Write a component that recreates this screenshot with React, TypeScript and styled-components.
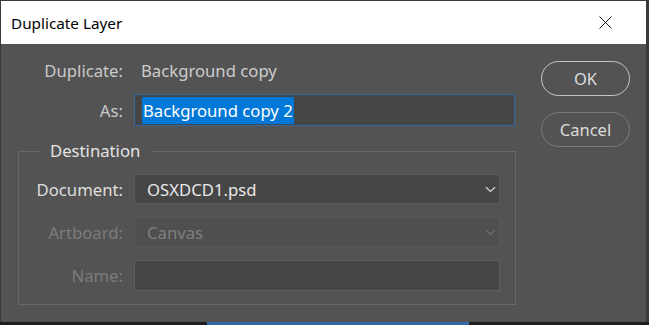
import React from "react";
import styled, { createGlobalStyle } from "styled-components";

const Global = createGlobalStyle`
  html, body { margin: 0; padding: 0; background: #3a3a3a; }
  body { font-family: "Noto Sans", "Open Sans", sans-serif; overflow: hidden; }
  * { box-sizing: border-box; }
`;

const Screen = styled.div`
  width: 649px;
  height: 325px;
  display: flex;
  flex-direction: column;
  padding: 1px 3px 0 1px;
`;

const Window = styled.div`
  flex: 1;
  display: flex;
  flex-direction: column;
  background: #535353;
`;

const TitleBar = styled.div`
  height: 43px;
  flex: none;
  background: #ffffff;
  display: flex;
  align-items: center;
  justify-content: space-between;
  padding: 0 34px 0 10px;
  color: #000;
  font-size: 15.3px;
`;

const CloseIcon = () => (
  <svg width="13" height="13" viewBox="0 0 13 13">
    <path d="M0.5 0.5 L12.5 12.5 M12.5 0.5 L0.5 12.5" stroke="#111" strokeWidth="1" />
  </svg>
);

const Body = styled.div`
  flex: 1;
  display: flex;
  padding: 10px 0 0 17px;
  gap: 25px;
`;

const Main = styled.div`
  width: 498px;
  display: flex;
  flex-direction: column;
`;

const TopGrid = styled.div`
  display: grid;
  grid-template-columns: 105px 381px;
  column-gap: 11px;
  row-gap: 8px;
  grid-auto-rows: 32px;
  align-items: center;
`;

const Label = styled.div<{ $disabled?: boolean; $bright?: boolean }>`
  text-align: right;
  font-size: 16.7px;
  color: ${(p) => (p.$disabled ? "#7b7b7b" : p.$bright ? "#dedede" : "#c9c9c9")};
`;

const Value = styled.div`
  font-size: 16.7px;
  color: #cdcdcd;
  padding-left: 7px;
`;

const TextField = styled.div`
  height: 32px;
  border: 1px solid #3469a8;
  background: #454545;
  display: flex;
  align-items: center;
  padding-left: 7px;
`;

const Selected = styled.span`
  background: #0078d7;
  color: #ffffff;
  font-size: 16.7px;
  line-height: 27px;
  padding: 0 1px;
`;

const Group = styled.fieldset`
  margin: 15px 0 0 0;
  border: 1px solid #676767;
  border-radius: 0;
  padding: 13px 15px 13px 0;
`;

const Legend = styled.legend`
  margin-left: 21px;
  padding: 0 11px 0 10px;
  font-size: 16.7px;
  line-height: 20px;
  color: #e4e4e4;
`;

const FormGrid = styled.div`
  display: grid;
  grid-template-columns: 104px 366px;
  column-gap: 11px;
  grid-template-rows: 30px 30px 31px;
  row-gap: 13px;
  align-items: center;
`;

const Select = styled.div<{ $disabled?: boolean }>`
  height: 100%;
  background: ${(p) => (p.$disabled ? "#4f4f4f" : "#464646")};
  border: 1px solid ${(p) => (p.$disabled ? "#595959" : "#5a5a5a")};
  display: flex;
  align-items: center;
  justify-content: space-between;
  padding: 0 3px 0 12px;
  font-size: 16.7px;
  color: ${(p) => (p.$disabled ? "#7f7f7f" : "#e8e8e8")};
`;

const Field = styled.div`
  height: 100%;
  background: #464646;
  border: 1px solid #5d5d5d;
`;

const Chevron = ({ color }: { color: string }) => (
  <svg width="11" height="7" viewBox="0 0 11 7">
    <path d="M1 1.2 L5.5 5.5 L10 1.2" fill="none" stroke={color} strokeWidth="1.2" />
  </svg>
);

const Buttons = styled.div`
  display: flex;
  flex-direction: column;
  gap: 16px;
  padding-top: 7px;
`;

const Pill = styled.button<{ $primary?: boolean }>`
  width: 89px;
  height: 35px;
  border-radius: 18px;
  border: 1.5px solid ${(p) => (p.$primary ? "#c6c6c6" : "#7c7c7c")};
  background: #535353;
  color: #dcdcdc;
  font-family: "Noto Sans", "Open Sans", sans-serif;
  font-size: 16.5px;
  padding: 0;
`;

const Taskbar = styled.div`
  height: 3px;
  flex: none;
  background: #1e1e1e;
  display: flex;
  padding-left: 207px;
  margin-right: -3px;
  margin-left: -1px;
`;

const TaskSegment = styled.div`
  width: 262px;
  background: #2f6aa6;
`;

export default function App() {
  return (
    <>
      <Global />
      <Screen>
        <Window>
          <TitleBar>
            <span>Duplicate Layer</span>
            <CloseIcon />
          </TitleBar>
          <Body>
            <Main>
              <TopGrid>
                <Label>Duplicate:</Label>
                <Value>Background copy</Value>
                <Label>As:</Label>
                <TextField>
                  <Selected>Background copy 2</Selected>
                </TextField>
              </TopGrid>
              <Group>
                <Legend>Destination</Legend>
                <FormGrid>
                  <Label $bright>Document:</Label>
                  <Select>
                    <span>OSXDCD1.psd</span>
                    <Chevron color="#d8d8d8" />
                  </Select>
                  <Label $disabled>Artboard:</Label>
                  <Select $disabled>
                    <span>Canvas</span>
                    <Chevron color="#6e6e6e" />
                  </Select>
                  <Label $disabled>Name:</Label>
                  <Field />
                </FormGrid>
              </Group>
            </Main>
            <Buttons>
              <Pill $primary>OK</Pill>
              <Pill>Cancel</Pill>
            </Buttons>
          </Body>
        </Window>
        <Taskbar>
          <TaskSegment />
        </Taskbar>
      </Screen>
    </>
  );
}
